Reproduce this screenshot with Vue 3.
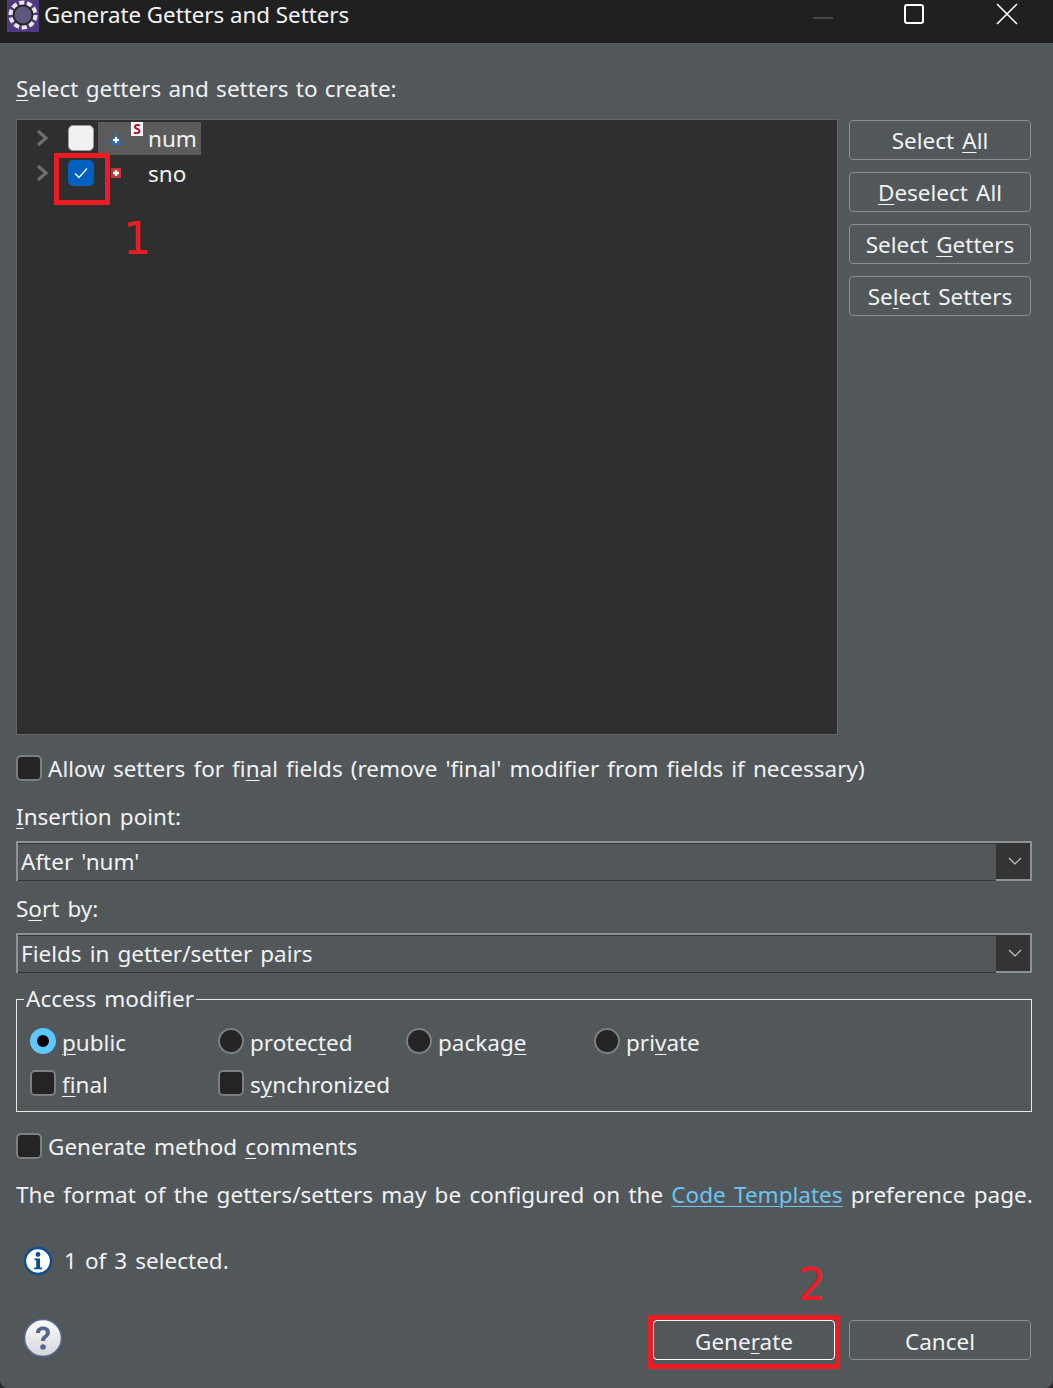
<script setup>
const radios = [
  { pre: '', u: 'p', post: 'ublic', on: true },
  { pre: 'protec', u: 't', post: 'ed', on: false },
  { pre: 'packag', u: 'e', post: '', on: false },
  { pre: 'pri', u: 'v', post: 'ate', on: false },
]
const sideButtons = [
  { pre: 'Select ', u: 'A', post: 'll' },
  { pre: '', u: 'D', post: 'eselect All' },
  { pre: 'Select ', u: 'G', post: 'etters' },
  { pre: 'Se', u: 'l', post: 'ect Setters' },
]
</script>

<template>
  <div class="win">
    <header class="titlebar">
      <svg class="logo" width="32" height="32" viewBox="0 0 32 32">
        <rect width="32" height="32" fill="#4f3a80" />
        <circle cx="16" cy="15" r="12" fill="none" stroke="#e8e8e8" stroke-width="5" stroke-dasharray="5 2.5" />
        <circle cx="16" cy="15" r="9.500" fill="#5f577e" stroke="#26262c" stroke-width="2" />
      </svg>
      <span class="title">Generate Getters and Setters</span>
      <div class="winctl">
        <svg width="22" height="20" viewBox="0 0 22 20"><path d="M1 14h20" stroke="#555" stroke-width="1.5" /></svg>
        <svg width="20" height="20" viewBox="0 0 20 20"><rect x="1" y="1" width="18" height="18" rx="2" fill="none" stroke="#fff" stroke-width="2" /></svg>
        <svg class="close" width="22" height="22" viewBox="0 0 22 22"><path d="M1 1l20 20M21 1L1 21" stroke="#fff" stroke-width="1.6" /></svg>
      </div>
    </header>

    <main class="body">
      <div class="label first"><span class="u">S</span>elect getters and setters to create:</div>

      <div class="picker">
        <div class="tree">
          <div class="row">
            <svg class="chev" width="14" height="18" viewBox="0 0 14 18"><path d="M2 2l8 7-8 7" fill="none" stroke="#6e6e6e" stroke-width="3.2" /></svg>
            <span class="tcheck white"></span>
            <div class="selected">
              <svg class="fieldicon" width="16" height="14" viewBox="0 0 16 14"><path d="M8 1l7 12H1z" fill="#2f6eab" /><path d="M8 5v6M5 8h6" stroke="#fff" stroke-width="2" /></svg>
              <span class="static">S</span>
              <span class="name">num</span>
            </div>
          </div>
          <div class="row">
            <svg class="chev" width="14" height="18" viewBox="0 0 14 18"><path d="M2 2l8 7-8 7" fill="none" stroke="#6e6e6e" stroke-width="3.2" /></svg>
            <span class="tcheck blue">
              <svg width="16" height="12" viewBox="0 0 16 12"><path d="M2 6.500l4 4 8-9" fill="none" stroke="#fff" stroke-width="1.300" /></svg>
            </span>
            <div class="plain">
              <svg class="fieldicon2" width="10" height="10" viewBox="0 0 10 10"><rect width="10" height="10" fill="#c8303c" /><path d="M5 2v6M2 5h6" stroke="#fff" stroke-width="2.400" /></svg>
              <span class="name">sno</span>
            </div>
          </div>
        </div>
        <div class="sidebtns">
          <button v-for="b in sideButtons" :key="b.post" class="btn">{{ b.pre }}<span class="u">{{ b.u }}</span>{{ b.post }}</button>
        </div>
      </div>

      <div class="checkline allow"><span class="check"></span><span class="text">Allow setters for fi<span class="u">n</span>al fields (remove 'final' modifier from fields if necessary)</span></div>

      <div class="label ins"><span class="u">I</span>nsertion point:</div>
      <div class="combo"><span class="val">After 'num'</span><span class="arrow"><svg width="14" height="8" viewBox="0 0 14 8"><path d="M1 1l6 6 6-6" fill="none" stroke="#c8c8c8" stroke-width="1.200" /></svg></span></div>

      <div class="label sort">S<span class="u">o</span>rt by:</div>
      <div class="combo second"><span class="val">Fields in getter/setter pairs</span><span class="arrow"><svg width="14" height="8" viewBox="0 0 14 8"><path d="M1 1l6 6 6-6" fill="none" stroke="#c8c8c8" stroke-width="1.200" /></svg></span></div>

      <fieldset class="group">
        <legend>Access modifier</legend>
        <div class="grid">
          <div v-for="r in radios" :key="r.pre + r.u" class="opt">
            <span class="radio" :class="{ on: r.on }"></span>
            <span class="text2">{{ r.pre }}<span class="u">{{ r.u }}</span>{{ r.post }}</span>
          </div>
          <div class="opt"><span class="check"></span><span class="text2"><span class="u">f</span>inal</span></div>
          <div class="opt"><span class="check"></span><span class="text2">s<span class="u">y</span>nchronized</span></div>
        </div>
      </fieldset>

      <div class="checkline gen"><span class="check"></span><span class="text">Generate method <span class="u">c</span>omments</span></div>

      <div class="format">The format of the getters/setters may be configured on the <span class="link">Code Templates</span> preference page.</div>

      <div class="status">
        <svg width="30" height="30" viewBox="0 0 30 30">
          <circle cx="15" cy="15" r="13" fill="#fff" stroke="#0d4f94" stroke-width="2.400" />
          <circle cx="15" cy="8.500" r="2.400" fill="#0d4f94" />
          <path d="M11.500 12.500h5.500v9h2.200v1.800h-8v-1.800h2v-7.200h-1.700z" fill="#0d4f94" />
        </svg>
        <span>1 of 3 selected.</span>
      </div>

      <div class="footer">
        <svg class="help" width="40" height="40" viewBox="0 0 40 40">
          <defs>
            <linearGradient id="hg" x1="0" y1="0" x2="0" y2="1"><stop offset="0" stop-color="#fdfdfd" /><stop offset="1" stop-color="#d4d6da" /></linearGradient>
          </defs>
          <circle cx="20" cy="20" r="18.500" fill="url(#hg)" stroke="#55688c" stroke-width="1.600" />
          <path d="M13 15c0-4.200 3-6.500 7-6.500s7 2.300 7 6c0 4.800-5 4.800-5 8.500h-4c0-5.500 5-5.500 5-8.500 0-1.500-1.200-2.500-3-2.500s-3 1-3 3z" fill="#55688c" />
          <circle cx="20" cy="29" r="2.800" fill="#55688c" />
        </svg>
        <button class="btn default">Gene<span class="u">r</span>ate</button>
        <button class="btn cancel">Cancel</button>
      </div>
    </main>

    <div class="mark box1"></div>
    <div class="mark box2"></div>
    <div class="num n1">1</div>
    <div class="num n2">2</div>
  </div>
</template>

<style>
html, body { margin: 0; background: #2a2a2a; }
</style>

<style scoped>
.win {
  position: relative;
  width: 1053px;
  height: 1388px;
  overflow: hidden;
  background: #52575a;
  border-radius: 0 0 8px 8px;
  color: #f0f2f4;
  font-family: "Noto Sans", "Liberation Sans", sans-serif;
  font-size: 22.5px;
  word-spacing: 2.2px;
  line-height: 32px;
}
.u { text-decoration: underline; text-underline-offset: 3px; text-decoration-thickness: 1px; }

.titlebar {
  height: 43px;
  background: #202020;
  display: flex;
  align-items: flex-start;
  padding-left: 7px;
  box-sizing: border-box;
}
.title { margin-left: 5px; line-height: 30px; color: #f4f4f4; font-size: 22.3px; word-spacing: 0; }
.winctl {
  margin-left: auto;
  display: flex;
  align-items: center;
  gap: 70px;
  height: 28px;
  padding-right: 35px;
}
.close { margin-left: 2px; }

.body { padding: 0 21px 0 16px; }
.label { height: 32px; box-sizing: border-box; }
.first { margin-top: 30px; word-spacing: 1.4px; }

.picker { display: flex; gap: 11px; margin-top: 15px; }
.tree {
  width: 822px;
  height: 616px;
  margin-top: -1px;
  box-sizing: border-box;
  background: #2f2f2f;
  border: 1px solid #606467;
  border-right-color: #6a6e70;
  padding-top: 2px;
}
.row { display: flex; align-items: center; height: 34px; position: relative; margin-bottom: 1px; }
.chev { margin-left: 19px; margin-top: -2px; flex: none; }
.tcheck {
  width: 26px; height: 26px; margin-left: 18px; border-radius: 5px; box-sizing: border-box; flex: none;
  display: flex; align-items: center; justify-content: center;
}
.tcheck.white { background: #f1f1f1; border: 1px solid #9a9a9a; margin-top: -2px; }
.tcheck.blue { background: #0060bf; margin-top: -2px; }
.selected {
  margin-left: 4px;
  margin-top: -2px;
  width: 103px; height: 33px;
  background: #5b5b5b;
  display: flex; align-items: center;
  position: relative;
}
.plain { width: 103px; height: 33px; margin-left: 4px; display: flex; align-items: center; position: relative; }
.fieldicon { margin-left: 10px; margin-top: 1px; }
.fieldicon2 { margin-left: 13px; margin-top: -3px; }
.static {
  position: absolute; left: 33px; top: 0;
  width: 12px; height: 14px;
  background: #fff; color: #b01030;
  font-size: 14px; line-height: 14px; font-weight: 700; text-align: center;
}
.name { position: absolute; left: 50px; top: 1px; color: #f0f2f4; }
.plain .name { top: 0; }

.sidebtns { display: flex; flex-direction: column; gap: 12px; }
.btn {
  width: 182px; height: 40px;
  box-sizing: border-box;
  background: transparent;
  border: 1px solid #8b8e90;
  border-radius: 4px;
  color: #f0f2f4;
  font: inherit;
  word-spacing: inherit;
  line-height: 36px;
  padding: 1px 0 0;
}

.checkline { display: flex; align-items: center; gap: 6px; height: 32px; }
.text { padding-top: 2px; }
.text2 { padding-top: 4px; }
.allow { margin-top: 17px; }
.gen { margin-top: 18px; }
.check {
  width: 26px; height: 26px; box-sizing: border-box; flex: none;
  background: #242424; border: 2px solid #7d7f80; border-radius: 5px;
}

.ins { margin-top: 16px; padding-top: 1px; }
.sort { margin-top: 12px; }
.combo {
  margin-top: 9px;
  height: 40px;
  box-sizing: border-box;
  border: 2px solid #8f9294;
  display: flex;
}
.combo.second { margin-top: 8px; }
.val { flex: 1; padding-left: 3px; background: #52575a; border-top: 1px solid #353535; border-bottom: 1px solid #353535; height: 36px; line-height: 36px; }
.arrow { width: 34px; box-sizing: border-box; padding-left: 4px; background: #343434; display: flex; align-items: center; justify-content: center; }

.group {
  margin: 10px 0 0;
  padding: 0 0 0 13px;
  height: 129px;
  box-sizing: border-box;
  border: 1px solid #e8e8e8;
  border-radius: 0;
  position: relative;
}
.group legend { padding: 0 2px; margin-left: -6px; line-height: 32px; height: 32px; }
.grid { display: grid; grid-template-columns: repeat(4, 188px); row-gap: 10px; margin-top: 10px; }
.opt { display: flex; align-items: center; gap: 6px; height: 32px; }
.radio {
  width: 26px; height: 26px; box-sizing: border-box; border-radius: 50%; flex: none;
  background: #242424; border: 2px solid #7d7f80;
}
.radio.on { background: #000; border: 7px solid #5cc8ff; }

.format { margin-top: 17px; white-space: nowrap; word-spacing: 2.4px; }
.link { color: #6fc3f0; text-decoration: underline; text-underline-offset: 3px; text-decoration-thickness: 1px; }

.status { display: flex; align-items: center; gap: 11px; margin: 34px 0 0 7px; height: 32px; }

.footer { display: flex; align-items: center; margin: 43px 1px 0 0; position: relative; height: 40px; }
.help { margin-left: 7px; margin-top: -4px; }
.footer .btn { padding-top: 3px; }
.footer .default { margin-left: auto; margin-right: 14px; border-color: #fff; }

.mark { position: absolute; border: 5px solid #ed1c24; box-sizing: border-box; }
.box1 { left: 54px; top: 153px; width: 56px; height: 52px; }
.box2 { left: 648px; top: 1315px; width: 192px; height: 54px; }
.num { position: absolute; color: #ed1c24; font-size: 44px; line-height: 50px; font-family: "DejaVu Sans", sans-serif; }
.n1 { left: 123px; top: 214px; }
.n2 { left: 798px; top: 1260px; }
</style>
